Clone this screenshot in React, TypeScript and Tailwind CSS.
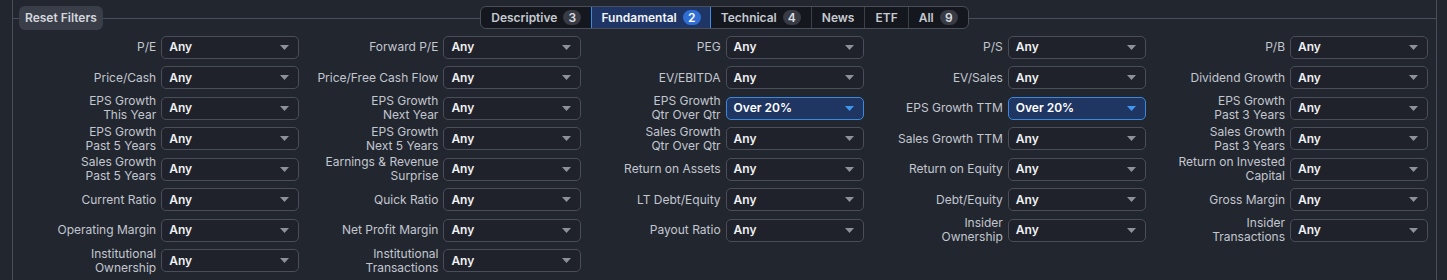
// Screener filter panel: Reset button, tab strip, 5-column grid of select filters.

type Filter = { label: string[]; value?: string };

const rows: (Filter | null)[][] = [
  [
    { label: ["P/E"] },
    { label: ["Forward P/E"] },
    { label: ["PEG"] },
    { label: ["P/S"] },
    { label: ["P/B"] },
  ],
  [
    { label: ["Price/Cash"] },
    { label: ["Price/Free Cash Flow"] },
    { label: ["EV/EBITDA"] },
    { label: ["EV/Sales"] },
    { label: ["Dividend Growth"] },
  ],
  [
    { label: ["EPS Growth", "This Year"] },
    { label: ["EPS Growth", "Next Year"] },
    { label: ["EPS Growth", "Qtr Over Qtr"], value: "Over 20%" },
    { label: ["EPS Growth TTM"], value: "Over 20%" },
    { label: ["EPS Growth", "Past 3 Years"] },
  ],
  [
    { label: ["EPS Growth", "Past 5 Years"] },
    { label: ["EPS Growth", "Next 5 Years"] },
    { label: ["Sales Growth", "Qtr Over Qtr"] },
    { label: ["Sales Growth TTM"] },
    { label: ["Sales Growth", "Past 3 Years"] },
  ],
  [
    { label: ["Sales Growth", "Past 5 Years"] },
    { label: ["Earnings & Revenue", "Surprise"] },
    { label: ["Return on Assets"] },
    { label: ["Return on Equity"] },
    { label: ["Return on Invested", "Capital"] },
  ],
  [
    { label: ["Current Ratio"] },
    { label: ["Quick Ratio"] },
    { label: ["LT Debt/Equity"] },
    { label: ["Debt/Equity"] },
    { label: ["Gross Margin"] },
  ],
  [
    { label: ["Operating Margin"] },
    { label: ["Net Profit Margin"] },
    { label: ["Payout Ratio"] },
    { label: ["Insider", "Ownership"] },
    { label: ["Insider", "Transactions"] },
  ],
  [
    { label: ["Institutional", "Ownership"] },
    { label: ["Institutional", "Transactions"] },
    null,
    null,
    null,
  ],
];

const tabs = [
  { name: "Descriptive", count: 3 },
  { name: "Fundamental", count: 2, active: true },
  { name: "Technical", count: 4 },
  { name: "News" },
  { name: "ETF" },
  { name: "All", count: 9 },
];

function Caret({ active }: { active?: boolean }) {
  return (
    <svg width="9" height="5" viewBox="0 0 9 5" className="shrink-0">
      <path d="M0 0h9L4.5 5z" fill={active ? "#3f97f0" : "#8d919a"} />
    </svg>
  );
}

function FilterCell({ f }: { f: Filter }) {
  const active = !!f.value;
  return (
    <div className="flex items-center justify-end gap-[5px]">
      <div className="text-right text-[12px] leading-[14px] text-[#c3c7cf]">
        {f.label.map((l) => (
          <div key={l}>{l}</div>
        ))}
      </div>
      <div
        className={`flex h-[23px] w-[138px] shrink-0 items-center justify-between rounded-[5px] border pl-[7px] pr-[9px] text-[12px] font-semibold ${
          active
            ? "border-[#3b88dc] bg-[#1f3562] text-white"
            : "border-[#4a4e59] bg-[#1f222a] text-[#eef0f3]"
        }`}
      >
        <span>{f.value ?? "Any"}</span>
        <Caret active={active} />
      </div>
    </div>
  );
}

export default function App() {
  return (
    <div className="h-[280px] w-[1447px] bg-[#22262f] pl-[12px] font-['Inter',sans-serif]">
      <div className="h-full w-[1425px] border-x border-[#4a4e5c]">
        {/* header: reset button + tabs on the rule */}
        <div className="grid grid-cols-[1fr_auto_1fr] items-start pt-[6px]">
          <div className="flex h-[24px] items-center">
            <div className="h-px w-[6px] bg-[#4a4e5c]" />
            <button
              type="button"
              className="h-[24px] rounded-[6px] bg-[#3a3e49] px-[6px] text-[12px] font-semibold text-[#d4d7dd]"
            >
              Reset Filters
            </button>
            <div className="h-px flex-1 bg-[#4a4e5c]" />
          </div>
          <div className="flex h-[23px] overflow-hidden rounded-[6px] border border-[#4a4e59] bg-[#14171d]">
            {tabs.map((t, i) => (
              <div
                key={t.name}
                className={`flex items-center gap-[6px] text-[12px] font-semibold ${
                  t.active
                    ? "-my-px border border-[#3b8de3] bg-[#1f3566] px-[9px] text-[#f2f4f7]"
                    : `px-[10px] text-[#c6cad1] ${i > 0 && !tabs[i - 1].active ? "border-l border-[#3c4049]" : ""}`
                }`}
              >
                <span>{t.name}</span>
                {t.count !== undefined && (
                  <span
                    className={`flex h-[15px] min-w-[18px] items-center justify-center rounded-full text-[12px] font-semibold ${
                      t.active ? "bg-[#2f6ed2] text-white" : "bg-[#383b44] text-[#dadde2]"
                    }`}
                  >
                    {t.count}
                  </span>
                )}
              </div>
            ))}
          </div>
          <div className="flex h-[24px] items-center">
            <div className="h-px flex-1 bg-[#4a4e5c]" />
          </div>
        </div>

        {/* filter grid */}
        <div className="grid auto-rows-[30.5px] grid-cols-5 items-center pl-[4px] pr-[8px] pt-[2px]">
          {rows.flatMap((r, ri) =>
            r.map((f, ci) =>
              f ? <FilterCell key={`${ri}-${ci}`} f={f} /> : <div key={`${ri}-${ci}`} />,
            ),
          )}
        </div>
      </div>
    </div>
  );
}
